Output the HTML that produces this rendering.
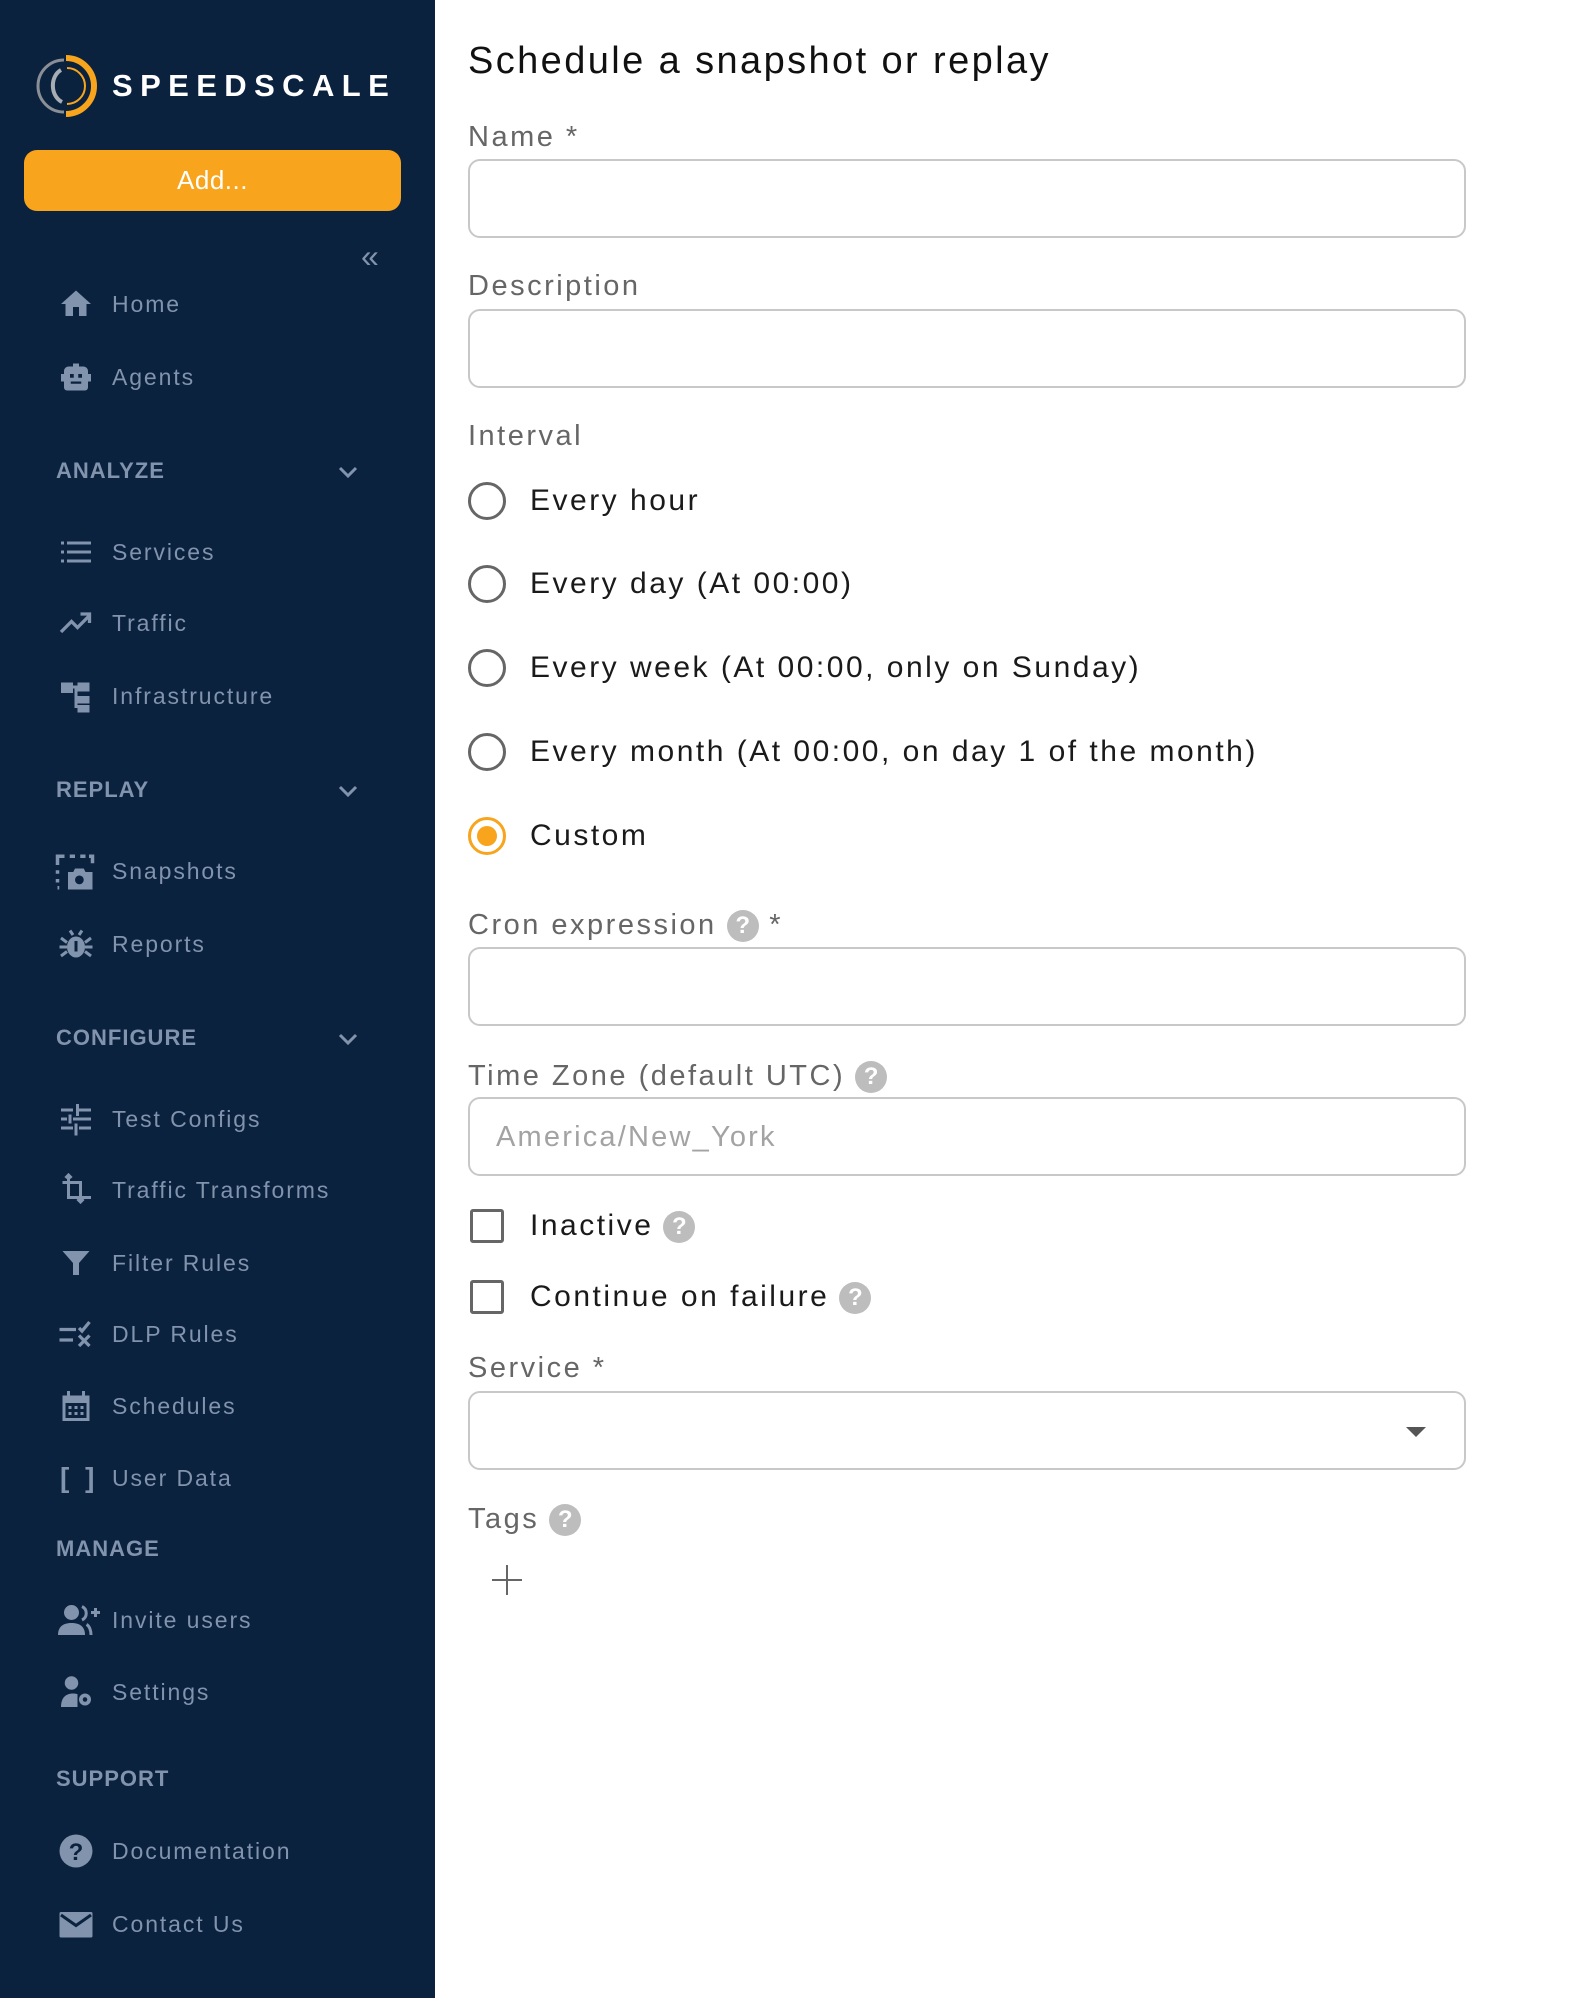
<!DOCTYPE html>
<html><head><meta charset="utf-8"><style>
*{margin:0;padding:0;box-sizing:border-box}
body{width:1576px;height:1998px;position:relative;background:#fff;font-family:"Liberation Sans",sans-serif;overflow:hidden}
#sb{position:absolute;left:0;top:0;width:435px;height:1998px;background:#0b223e}
.a{position:absolute;white-space:nowrap}
.nav{position:absolute;left:112px;font-size:23px;color:#8193ad;letter-spacing:1.9px;line-height:30px}
.ic{position:absolute;left:58px;width:36px;height:36px}
.sec{position:absolute;left:56px;font-size:22px;font-weight:bold;color:#8193ad;letter-spacing:1px;line-height:30px}
.chev{position:absolute;left:337px;width:22px;height:14px}
.lbl{position:absolute;left:468px;font-size:29px;color:#666;letter-spacing:2.5px;line-height:36px}
.inp{position:absolute;left:468px;width:998px;height:79px;border:2px solid #c8c8c8;border-radius:12px}
.radio{position:absolute;left:468px;width:38px;height:38px;border:3px solid #666;border-radius:50%}
.rt{position:absolute;left:530px;font-size:30px;color:#1a1a1a;letter-spacing:2.5px;line-height:36px}
.cb{position:absolute;left:470px;width:34px;height:34px;border:3px solid #666;border-radius:3px}
.q{display:inline-block;width:32px;height:32px;border-radius:50%;background:#bdbdbd;color:#fff;font-size:24px;font-weight:bold;text-align:center;line-height:32px;vertical-align:middle;margin-left:10px;letter-spacing:0}
</style></head><body>
<div id="sb">
<svg class="a" style="left:34px;top:54px" width="64" height="64" viewBox="0 0 64 64">
<path d="M32 4 A28 28 0 0 1 32 60" fill="none" stroke="#f8a41c" stroke-width="6"/>
<path d="M30 6 A26 26 0 0 0 30 58" fill="none" stroke="#8a8f96" stroke-width="3"/>
<path d="M33 14 A18 18 0 0 1 33 50" fill="none" stroke="#f8a41c" stroke-width="2"/>
<path d="M27 16 C16 22 16 42 28 48" fill="none" stroke="#a8adb3" stroke-width="4"/>
</svg>
<div class="a" style="left:112px;top:67px;font-size:31px;font-weight:bold;color:#fff;letter-spacing:7.4px;line-height:38px">SPEEDSCALE</div>
<div class="a" style="left:24px;top:150px;width:377px;height:61px;background:#f8a41c;border-radius:13px;color:#fff;font-size:26px;text-align:center;line-height:61px;letter-spacing:.5px">Add...</div>
<div class="a" style="left:361px;top:238px;font-size:32px;color:#8193ad;line-height:36px">«</div>

<svg class="ic" style="top:286px" viewBox="0 0 24 24"><path fill="#8193ad" d="M10 20v-6h4v6h5v-8h3L12 3 2 12h3v8z"/></svg>
<div class="nav" style="top:289px">Home</div>
<svg class="ic" style="top:359px" viewBox="0 0 24 24"><path fill="#8193ad" d="M10 3h4v2h3a3 3 0 0 1 3 3v2h2v5h-2v4a2 2 0 0 1-2 2H6a2 2 0 0 1-2-2v-4H2v-5h2V8a3 3 0 0 1 3-3h3z"/><rect x="8" y="10" width="2.5" height="2.5" fill="#0b223e"/><rect x="13.5" y="10" width="2.5" height="2.5" fill="#0b223e"/><rect x="8.5" y="15" width="7" height="1.5" fill="#0b223e"/></svg>
<div class="nav" style="top:362px">Agents</div>

<div class="sec" style="top:456px">ANALYZE</div>
<svg class="chev" style="top:465px" viewBox="0 0 22 14"><path d="M3 3l8 8 8-8" fill="none" stroke="#8193ad" stroke-width="3"/></svg>
<svg class="ic" style="top:534px" viewBox="0 0 24 24"><g fill="#8193ad"><rect x="2" y="5" width="2" height="2"/><rect x="2" y="11" width="2" height="2"/><rect x="2" y="17" width="2" height="2"/><rect x="6" y="5" width="16" height="2"/><rect x="6" y="11" width="16" height="2"/><rect x="6" y="17" width="16" height="2"/></g></svg>
<div class="nav" style="top:537px">Services</div>
<svg class="ic" style="top:605px" viewBox="0 0 24 24"><path d="M2 18l7-7 4 4 8-8M15 6h6v6" fill="none" stroke="#8193ad" stroke-width="2.2"/></svg>
<div class="nav" style="top:608px">Traffic</div>
<svg class="ic" style="top:678px" viewBox="0 0 24 24"><g fill="#8193ad"><rect x="2" y="3" width="8" height="7"/><rect x="13" y="3" width="8" height="6"/><rect x="13" y="12" width="8" height="5"/><rect x="13" y="18" width="8" height="5"/><rect x="10" y="5" width="3" height="2"/><rect x="11" y="7" width="2" height="13"/></g></svg>
<div class="nav" style="top:681px">Infrastructure</div>

<div class="sec" style="top:775px">REPLAY</div>
<svg class="chev" style="top:784px" viewBox="0 0 22 14"><path d="M3 3l8 8 8-8" fill="none" stroke="#8193ad" stroke-width="3"/></svg>
<svg class="ic" style="top:851px;left:54px;width:42px;height:42px" viewBox="0 0 24 24"><path d="M2 8V3h4M9 3h3M15 3h3M20 3h2v4M2 11v2M2 16v2M2 21h1" fill="none" stroke="#8193ad" stroke-width="2"/><path fill="#8193ad" d="M8 12h3l1-2h5l1 2h4v10H8z"/><circle cx="14.5" cy="16.5" r="2.5" fill="#0b223e"/></svg>
<div class="nav" style="top:856px">Snapshots</div>
<svg class="ic" style="top:926px" viewBox="0 0 24 24"><g fill="#8193ad"><ellipse cx="12" cy="14" rx="6" ry="7"/><rect x="1" y="13" width="5" height="2"/><rect x="18" y="13" width="5" height="2"/><path d="M2 8l4 3M22 8l-4 3M2 20l4-3M22 20l-4-3M8 3l2 3M16 3l-2 3" stroke="#8193ad" stroke-width="2"/></g><rect x="11" y="10" width="2" height="7" fill="#0b223e"/></svg>
<div class="nav" style="top:929px">Reports</div>

<div class="sec" style="top:1023px">CONFIGURE</div>
<svg class="chev" style="top:1032px" viewBox="0 0 22 14"><path d="M3 3l8 8 8-8" fill="none" stroke="#8193ad" stroke-width="3"/></svg>
<svg class="ic" style="top:1101px" viewBox="0 0 24 24"><g fill="#8193ad"><rect x="2" y="5" width="8" height="2"/><rect x="14" y="5" width="8" height="2"/><rect x="12" y="2" width="2" height="8"/><rect x="2" y="11" width="4" height="2"/><rect x="10" y="11" width="12" height="2"/><rect x="7" y="9" width="2" height="6"/><rect x="2" y="17" width="8" height="2"/><rect x="14" y="17" width="8" height="2"/><rect x="11" y="15" width="2" height="8"/></g></svg>
<div class="nav" style="top:1104px">Test Configs</div>
<svg class="ic" style="top:1172px" viewBox="0 0 24 24"><path d="M7 2v15h15M3 7h12v13M5 4l2-2 2 2M13 18l2 2 2-2" fill="none" stroke="#8193ad" stroke-width="2"/></svg>
<div class="nav" style="top:1175px">Traffic Transforms</div>
<svg class="ic" style="top:1245px" viewBox="0 0 24 24"><path fill="#8193ad" d="M3 4h18l-7 8v8h-4v-8z"/></svg>
<div class="nav" style="top:1248px">Filter Rules</div>
<svg class="ic" style="top:1316px" viewBox="0 0 24 24"><g fill="none" stroke="#8193ad" stroke-width="2.2"><path d="M1 9h11M1 16h9M14 8l2 2 5-6M14 13l7 7M21 13l-7 7"/></g></svg>
<div class="nav" style="top:1319px">DLP Rules</div>
<svg class="ic" style="top:1388px" viewBox="0 0 24 24"><path fill="#8193ad" d="M3 5h18v17H3zM6 2h2v4H6zM16 2h2v4h-2z"/><rect x="5" y="10" width="14" height="10" fill="#0b223e"/><g fill="#8193ad"><rect x="7" y="12" width="2" height="2"/><rect x="11" y="12" width="2" height="2"/><rect x="15" y="12" width="2" height="2"/><rect x="7" y="16" width="2" height="2"/><rect x="11" y="16" width="2" height="2"/><rect x="15" y="16" width="2" height="2"/></g></svg>
<div class="nav" style="top:1391px">Schedules</div>
<div class="a" style="left:60px;top:1462px;font-size:28px;font-weight:bold;color:#8193ad;letter-spacing:4px;line-height:32px">[ ]</div>
<div class="nav" style="top:1463px">User Data</div>

<div class="sec" style="top:1534px">MANAGE</div>
<svg class="ic" style="top:1602px;width:42px" viewBox="0 0 28 24"><g fill="#8193ad"><circle cx="9" cy="7" r="5"/><path d="M0 22c0-6 4-8 9-8s9 2 9 8z"/><path d="M16 3a5 5 0 0 1 0 9M19 15c2 1 3 4 3 7" fill="none" stroke="#8193ad" stroke-width="2"/><rect x="22" y="6" width="6" height="2"/><rect x="24" y="4" width="2" height="6"/></g></svg>
<div class="nav" style="top:1605px">Invite users</div>
<svg class="ic" style="top:1674px" viewBox="0 0 24 24"><g fill="#8193ad"><circle cx="9" cy="6" r="4.5"/><path d="M2 22c0-6 3-9 8-9 2 0 3 .5 3 .5V22z"/><circle cx="18" cy="17" r="4"/></g><circle cx="18" cy="17" r="1.5" fill="#0b223e"/></svg>
<div class="nav" style="top:1677px">Settings</div>

<div class="sec" style="top:1764px">SUPPORT</div>
<svg class="ic" style="top:1833px" viewBox="0 0 24 24"><circle cx="12" cy="12" r="11" fill="#8193ad"/><text x="12" y="18" font-size="16" font-weight="bold" text-anchor="middle" fill="#0b223e" font-family="Liberation Sans">?</text></svg>
<div class="nav" style="top:1836px">Documentation</div>
<svg class="ic" style="top:1906px" viewBox="0 0 24 24"><rect x="1" y="4" width="22" height="17" rx="1" fill="#8193ad"/><path d="M2 6l10 7 10-7" fill="none" stroke="#0b223e" stroke-width="2"/></svg>
<div class="nav" style="top:1909px">Contact Us</div>
</div>

<div class="a" style="left:468px;top:39px;font-size:38px;color:#111;letter-spacing:2.4px;line-height:44px">Schedule a snapshot or replay</div>
<div class="lbl" style="top:119px">Name *</div>
<div class="inp" style="top:159px"></div>
<div class="lbl" style="top:268px">Description</div>
<div class="inp" style="top:309px"></div>
<div class="lbl" style="top:418px">Interval</div>

<div class="radio" style="top:482px"></div><div class="rt" style="top:483px">Every hour</div>
<div class="radio" style="top:565px"></div><div class="rt" style="top:566px">Every day (At 00:00)</div>
<div class="radio" style="top:649px"></div><div class="rt" style="top:650px">Every week (At 00:00, only on Sunday)</div>
<div class="radio" style="top:733px"></div><div class="rt" style="top:734px">Every month (At 00:00, on day 1 of the month)</div>
<div class="radio" style="top:817px;border-color:#f8a41c"><div style="position:absolute;left:6px;top:6px;width:20px;height:20px;border-radius:50%;background:#f8a41c"></div></div><div class="rt" style="top:818px">Custom</div>

<div class="lbl" style="top:907px">Cron expression<span class="q">?</span> *</div>
<div class="inp" style="top:947px"></div>
<div class="lbl" style="top:1058px">Time Zone (default UTC)<span class="q">?</span></div>
<div class="inp" style="top:1097px"><div style="position:absolute;left:26px;top:20px;font-size:29px;color:#a3a3a3;letter-spacing:2.2px;line-height:36px">America/New_York</div></div>
<div class="cb" style="top:1209px"></div><div class="rt" style="top:1208px">Inactive<span class="q">?</span></div>
<div class="cb" style="top:1280px"></div><div class="rt" style="top:1279px">Continue on failure<span class="q">?</span></div>
<div class="lbl" style="top:1350px">Service *</div>
<div class="inp" style="top:1391px"><div style="position:absolute;right:38px;top:34px;width:0;height:0;border-left:10px solid transparent;border-right:10px solid transparent;border-top:10px solid #555"></div></div>
<div class="lbl" style="top:1501px">Tags<span class="q">?</span></div>
<div class="a" style="left:492px;top:1565px;width:30px;height:30px"><div style="position:absolute;left:14px;top:0;width:2px;height:30px;background:#666"></div><div style="position:absolute;left:0;top:14px;width:30px;height:2px;background:#666"></div></div>
</body></html>
